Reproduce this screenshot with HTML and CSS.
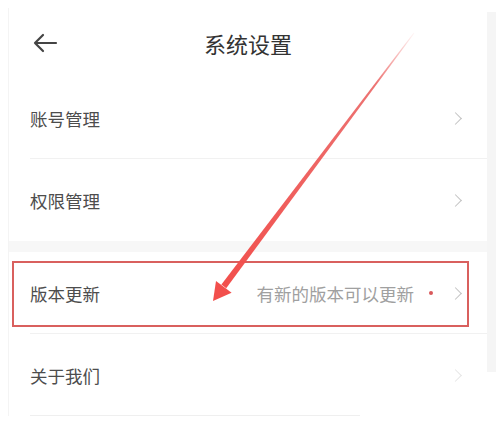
FILE: index.html
```html
<!DOCTYPE html>
<html lang="zh-CN">
<head>
<meta charset="utf-8">
<title>系统设置</title>
<link rel="stylesheet" href="styles.css">
</head>
<body>
<div class="page">
  <div class="screen">
    <header class="header">
      <svg class="back" width="26" height="22" viewBox="0 0 26 22">
        <path d="M24 11H3M11 3L3 11L11 19" fill="none" stroke="#444" stroke-width="2.2" stroke-linecap="round" stroke-linejoin="round"/>
      </svg>
      <h1 class="title">系统设置</h1>
    </header>
    <div class="group">
      <div class="row row-line">
        <span class="label">账号管理</span>
        <span class="chev"></span>
      </div>
      <div class="row">
        <span class="label">权限管理</span>
        <span class="chev"></span>
      </div>
    </div>
    <div class="band"></div>
    <div class="group">
      <div class="row row-line">
        <span class="label">版本更新</span>
        <span class="value">有新的版本可以更新</span>
        <span class="dot"></span>
        <span class="chev"></span>
      </div>
      <div class="row row-short">
        <span class="label">关于我们</span>
        <span class="chev chev-faint"></span>
      </div>
    </div>
  </div>
  <div class="side"></div>
  <div class="mark"></div>
  <svg class="arrow" width="496" height="427" viewBox="0 0 496 427">
    <defs>
      <linearGradient id="g" x1="414" y1="33" x2="224" y2="287" gradientUnits="userSpaceOnUse">
        <stop offset="0" stop-color="#ef5350" stop-opacity="0.05"/>
        <stop offset="0.2" stop-color="#e8504f" stop-opacity="0.8"/>
        <stop offset="1" stop-color="#f24f4c"/>
      </linearGradient>
    </defs>
    <polygon points="414.4,33.3 413.6,32.7 221.4,284.6 226.2,288.2" fill="url(#g)"/>
    <polygon points="213,301 216,281 231.6,292.8" fill="#f24f4c"/>
  </svg>
</div>
</body>
</html>
```

FILE: styles.css
```css
html, body {
  margin: 0;
  padding: 0;
  background: #fff;
}
body {
  font-family: "Noto Sans CJK SC", "Noto Sans", sans-serif;
}
.page {
  position: relative;
  width: 496px;
  height: 427px;
  overflow: hidden;
  display: flex;
  align-items: flex-start;
}
.screen {
  width: 478px;
  margin-left: 8px;
  margin-top: 8px;
  border-left: 1px solid #f4f4f4;
  display: flex;
  flex-direction: column;
}
.side {
  flex: 1;
  margin-top: 12px;
  height: 360px;
  background: #f5f5f5;
}
.header {
  height: 69px;
  display: flex;
  align-items: center;
  position: relative;
  padding-left: 23px;
}
.back {
  display: block;
  margin-top: 0;
}
.title {
  position: absolute;
  left: 0;
  right: 0;
  top: 0;
  bottom: 0;
  margin: 0;
  display: flex;
  align-items: center;
  justify-content: center;
  font-size: 22px;
  font-weight: 400;
  color: #333;
  pointer-events: none;
}
.row {
  height: 82px;
  display: flex;
  align-items: center;
  padding-left: 21px;
  padding-right: 24px;
  position: relative;
}
.row-line::after {
  content: "";
  position: absolute;
  left: 21px;
  right: 0;
  bottom: 0;
  height: 1px;
  background: #f1f1f1;
}
.row-short::after {
  content: "";
  position: absolute;
  left: 21px;
  width: 330px;
  bottom: 0;
  height: 1px;
  background: #efefef;
}
.label {
  flex: 1;
  font-size: 17.5px;
  color: #4d4d4d;
}
.value {
  font-size: 17.5px;
  color: #a0a0a0;
}
.dot {
  width: 4px;
  height: 4px;
  border-radius: 50%;
  background: #d9585a;
  margin-left: 15px;
  margin-right: 18px;
}
.chev {
  width: 8px;
  height: 8px;
  border-top: 1.6px solid #c2c2c2;
  border-right: 1.6px solid #c2c2c2;
  transform: rotate(45deg);
  margin-right: 3px;
}
.chev-faint {
  border-color: #e6e6e6;
}
.band {
  height: 11px;
  background: #f7f7f7;
}
.mark {
  position: absolute;
  left: 12px;
  top: 261px;
  width: 453px;
  height: 62px;
  border: 2px solid #d9605e;
}
.arrow {
  position: absolute;
  left: 0;
  top: 0;
  pointer-events: none;
}
```
